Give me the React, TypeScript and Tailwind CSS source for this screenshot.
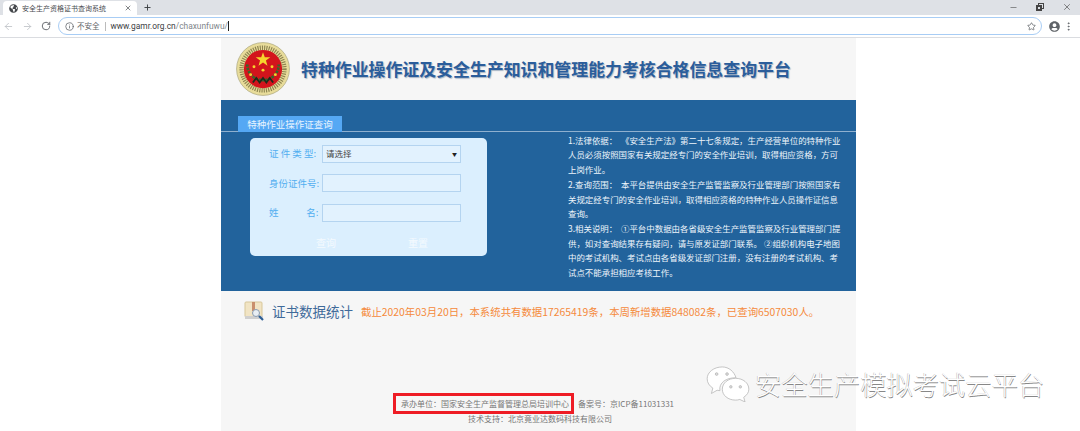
import { ArrowLeft, ArrowRight, RotateCw, Info, Star, MoreVertical, Minus, X, Plus } from "lucide-react";
import { FaGlobeAmericas, FaUserCircle } from "react-icons/fa";

const font = "font-['Noto_Sans_CJK_SC',sans-serif]";

function Emblem() {
	const stars = [
		[24, 25],
		[16, 22],
		[32, 22],
		[13, 29],
		[35, 29],
	];
	return (
		<svg width="54" height="54" viewBox="0 0 48 48">
			<circle cx="24" cy="24" r="23.5" fill="#e8dc9a" stroke="#a9a47c" strokeWidth="0.6" />
			<circle cx="24" cy="24" r="19" fill="none" stroke="#8d8450" strokeWidth="4" strokeDasharray="1 1" />
			<circle cx="24" cy="24" r="17" fill="#d3141c" />
			<path d="M10 20a14 14 0 0 0 28 0" fill="none" stroke="#2f6b2c" strokeWidth="2.400" strokeDasharray="2 1" />
			<path d="M24 9l1.600 4.600h4.900l-3.900 2.900 1.400 4.600-4-2.800-4 2.800 1.400-4.600-3.900-2.900h4.900z" fill="#f6d32d" />
			{stars.map(([x, y]) => (
				<circle key={`${x}-${y}`} cx={x} cy={y} r="1.300" fill="#f6d32d" />
			))}
			<path d="M15 36l3-4 3 4 3-4 3 4 3-4 3 4" fill="none" stroke="#1f2b1a" strokeWidth="1.600" />
		</svg>
	);
}

function BookIcon() {
	return (
		<svg width="21" height="21" viewBox="0 0 21 21">
			<rect x="1" y="1" width="17" height="15" rx="1" fill="#f1e4c4" stroke="#d8c79a" />
			<rect x="8" y="1" width="3" height="9" fill="#c98f6d" />
			<rect x="1" y="15" width="18" height="3" fill="#cfcfcf" />
			<circle cx="12" cy="12" r="3.500" fill="#e8eef4" stroke="#8a9bb0" />
			<path d="M15 15l4 4" stroke="#2c5d94" strokeWidth="2.200" />
		</svg>
	);
}

function WechatMark() {
	return (
		<svg width="44" height="36" viewBox="0 0 46 38" fill="#fff" stroke="#b4b4b4" strokeWidth="0.8">
			<path d="M17 1C8 1 1 6.500 1 13.500c0 4 2.300 7.500 6 9.800L5.500 29l6-3.400c1 .2 2 .3 3 .4C13 18 21 12 31.500 12.500 29.500 6 24 1 17 1z" />
			<path d="M31 13c-8 0-14 5-14 11.500S23 36 31 36c1.600 0 3-.2 4.500-.7L41 38l-1.400-5C43 30.800 45 27.800 45 24.500 45 18 39 13 31 13z" />
			<circle cx="11" cy="8.500" r="1.400" fill="#ddd" />
			<circle cx="22" cy="8.500" r="1.400" fill="#ddd" />
			<circle cx="26" cy="22" r="1.300" fill="#ddd" />
			<circle cx="36" cy="22" r="1.300" fill="#ddd" />
		</svg>
	);
}

function FormRow({ label, children }: { label: React.ReactNode; children: React.ReactNode }) {
	return (
		<div className="flex items-center h-[17px]">
			<div className="w-[53px] shrink-0 text-[9.500px] text-[#52aef0] whitespace-pre">{label}</div>
			{children}
		</div>
	);
}

export default function App() {
	return (
		<div className={`relative h-[431px] w-[1080px] overflow-hidden bg-white flex flex-col ${font}`}>
			{/* browser chrome */}
			<div className="h-[15px] shrink-0 bg-[#dee1e6] flex items-end">
				<div className="ml-[3px] w-[134px] h-[14px] bg-white rounded-t-[4px] flex items-center pl-[6px] pr-[5px]">
					<FaGlobeAmericas className="text-[#45484c] shrink-0" size={9} />
					<span className="ml-[4px] text-[7px] text-[#4a4d51] whitespace-nowrap">安全生产资格证书查询系统</span>
					<X className="ml-auto text-[#45484c]" size={8} strokeWidth={2} />
				</div>
				<Plus className="ml-[6px] mb-[3px] text-[#3c4043]" size={9} strokeWidth={2.500} />
				<div className="ml-auto flex items-center gap-[18px] pr-[8px] mb-[3px] text-[#444]">
					<Minus size={9} strokeWidth={1.500} />
					<div className="relative w-[8px] h-[8px]">
						<div className="absolute left-[2px] top-0 w-[6px] h-[6px] border border-[#444]" />
						<div className="absolute left-0 top-[2px] w-[6px] h-[6px] border-2 border-[#444] bg-[#dee1e6]" />
					</div>
					<X size={10} strokeWidth={1.500} />
				</div>
			</div>
			<div className="h-[23px] shrink-0 bg-white border-b border-[#dadce0] flex items-center pl-[3px] pr-[6px]">
				<ArrowLeft className="text-[#bdc1c6]" size={11} strokeWidth={1.800} />
				<ArrowRight className="ml-[8px] text-[#bdc1c6]" size={11} strokeWidth={1.800} />
				<RotateCw className="ml-[8px] text-[#5f6368]" size={10} strokeWidth={2.200} />
				<div className="ml-[7px] flex-1 h-[18px] border border-[#a8cdf5] rounded-full flex items-center pl-[6px] pr-[5px]">
					<Info className="text-[#5f6368]" size={9} strokeWidth={2} />
					<span className="ml-[3px] text-[7.500px] text-[#5f6368]">不安全</span>
					<div className="ml-[5px] w-px h-[9px] bg-[#bbb]" />
					<span className="ml-[5px] text-[8.400px] font-['Roboto',sans-serif] text-[#3c4043] whitespace-nowrap">
						www.gamr.org.cn<span className="text-[#80868b]">/chaxunfuwu/</span>
					</span>
					<div className="w-px h-[10px] bg-[#222]" />
					<Star className="ml-auto text-[#5f6368]" size={9} strokeWidth={2} />
				</div>
				<FaUserCircle className="ml-[7px] text-[#5f6368]" size={11} />
				<MoreVertical className="ml-[3px] text-[#5f6368]" size={11} strokeWidth={2} />
			</div>

			{/* page */}
			<div className="flex-1 min-h-0 w-[635px] ml-[221px] bg-[#f6f6f6] flex flex-col">
				<div className="h-[62px] shrink-0 flex items-center pl-[15px]">
					<Emblem />
					<h1 className="ml-[11px] text-[16.900px] leading-none font-bold text-[#2b5d9b] whitespace-nowrap [text-shadow:1px_1px_1px_#a9b6c6]">
						特种作业操作证及安全生产知识和管理能力考核合格信息查询平台
					</h1>
				</div>

				<div className="h-[191px] shrink-0 bg-[#22639c] pt-[16px]">
					<div className="h-[16px] border-b border-[#8fb0cf]">
						<div className="ml-[17px] w-[104px] h-[16px] bg-[#55a8f4] text-[9.500px] leading-[16px] text-[#e8f4ff] text-center">
							特种作业操作证查询
						</div>
					</div>
					<div className="flex pt-[6px]">
						<div className="ml-[29px] w-[237px] h-[118px] shrink-0 rounded-[5px] bg-[#dbeffe] pl-[19px] pt-[7px] flex flex-col gap-[12.500px]">
							<FormRow label={"证 件 类 型:"}>
								<div className="w-[139px] h-[18px] border border-[#b4d4f0] bg-[#e2f2fe] flex items-center justify-between px-[3px]">
									<span className="text-[8.500px] text-[#444]">请选择</span>
									<span className="text-[5px] text-[#222]">▼</span>
								</div>
							</FormRow>
							<FormRow label="身份证件号:">
								<div className="w-[139px] h-[18px] border border-[#b4d4f0] bg-[#e2f2fe]" />
							</FormRow>
							<FormRow label={"姓             名:"}>
								<div className="w-[139px] h-[18px] border border-[#b4d4f0] bg-[#e2f2fe]" />
							</FormRow>
							<div className="flex pl-[47px] gap-[72px] text-[10px] text-[#f4faff] pt-[1px]">
								<span>查询</span>
								<span>重置</span>
							</div>
						</div>
						<div className="ml-[81px] w-[276px] -mt-[5px] text-[8.450px] leading-[14.400px] text-[#eef5fb] flex flex-col gap-[1px]">
							<p>1.法律依据：&nbsp; 《安全生产法》第二十七条规定，生产经营单位的特种作业人员必须按照国家有关规定经专门的安全作业培训，取得相应资格，方可上岗作业。</p>
							<p>2.查询范围：&nbsp; 本平台提供由安全生产监管监察及行业管理部门按照国家有关规定经专门的安全作业培训，取得相应资格的特种作业人员操作证信息查询。</p>
							<p>3.相关说明：&nbsp; ①平台中数据由各省级安全生产监管监察及行业管理部门提供，如对查询结果存有疑问，请与原发证部门联系。 ②组织机构电子地图中的考试机构、考试点由各省级发证部门注册，没有注册的考试机构、考试点不能承担相应考核工作。</p>
						</div>
					</div>
				</div>

				<div className="h-[38px] shrink-0 flex items-center pl-[23px] pt-[3px]">
					<BookIcon />
					<span className="ml-[7px] text-[13.500px] text-[#3f6a9a] whitespace-nowrap">证书数据统计</span>
					<span className="ml-[8px] text-[10.400px] text-[#f58a3c] whitespace-nowrap">
						截止2020年03月20日，本系统共有数据17265419条，本周新增数据848082条，已查询6507030人。
					</span>
				</div>

				<div className="mt-auto pb-[6px] text-[8px] leading-[12px] text-[#777] whitespace-nowrap">
					<div className="flex items-center pl-[172px]">
						<div className="w-[181px] h-[21px] border-[3px] border-[#ee1c25] pl-[5px] flex items-center">
							承办单位：国家安全生产监督管理总局培训中心
						</div>
						<span className="ml-[4px]">备案号：京ICP备11031331</span>
					</div>
					<div className="pl-[247px] mt-[-1px]">技术支持：北京竟业达数码科技有限公司</div>
				</div>
			</div>

			{/* watermark */}
			<div className="absolute left-[706px] top-[366px] flex items-center gap-[5px]">
				<WechatMark />
				<span className="text-[26.300px] leading-none font-extralight text-white whitespace-nowrap [text-shadow:0.5px_0.5px_0.5px_#888,-0.5px_-0.5px_0.5px_#bbb]">
					安全生产模拟考试云平台
				</span>
			</div>
		</div>
	);
}
